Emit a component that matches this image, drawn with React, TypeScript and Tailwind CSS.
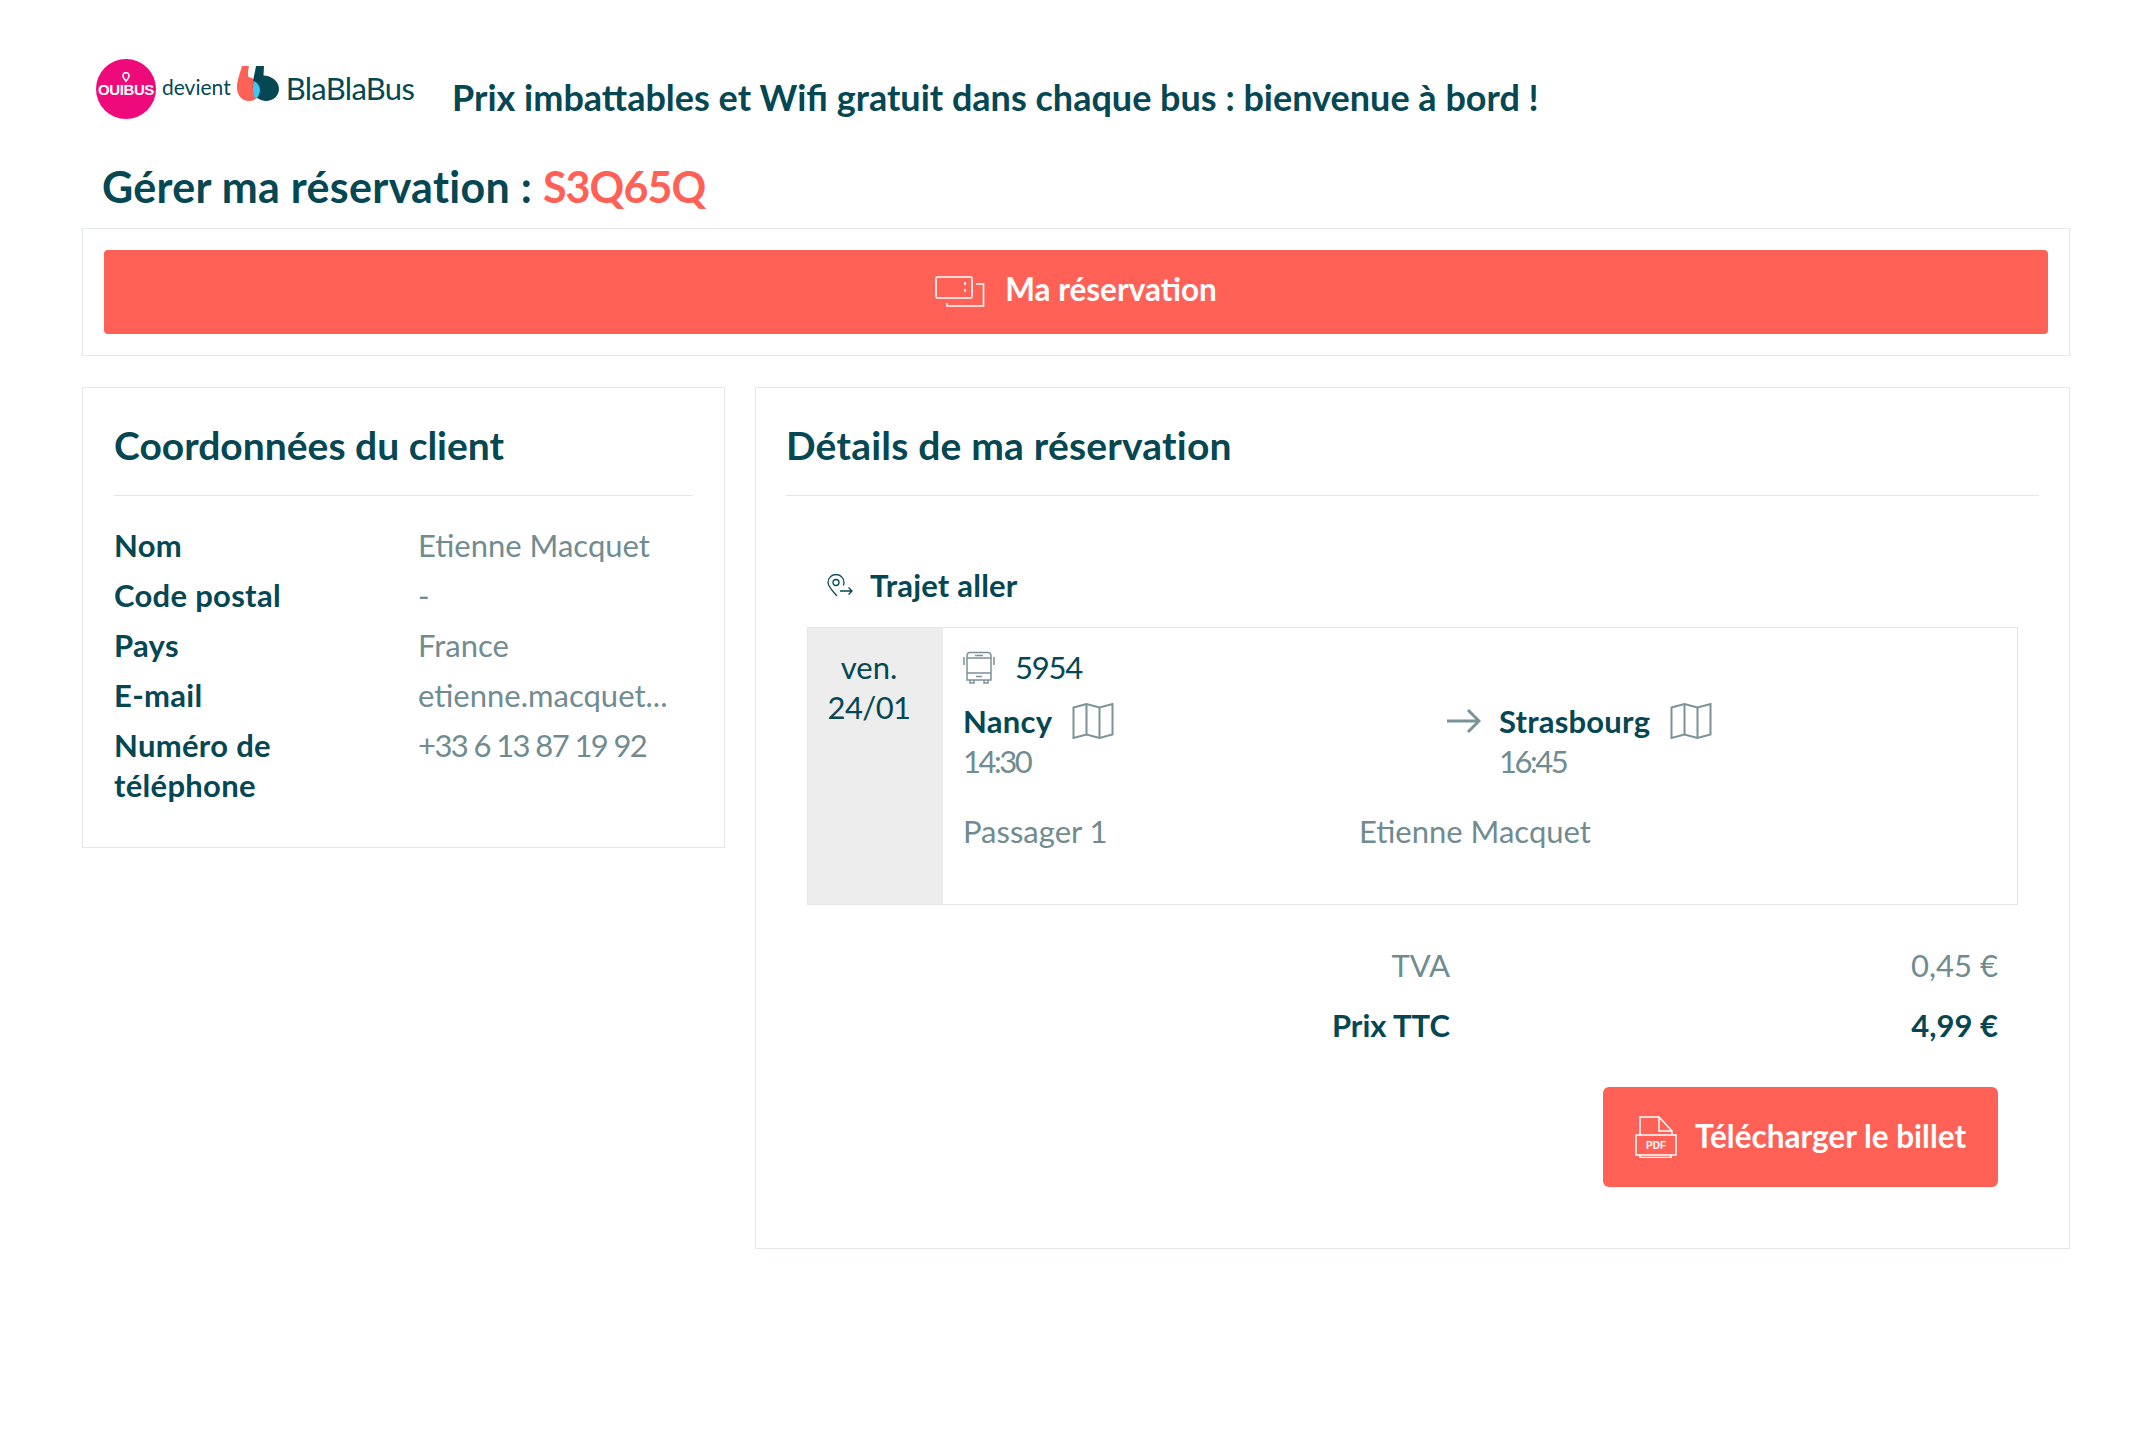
import React from 'react';

const MapIcon = () => (
  <svg width="42" height="38" viewBox="0 0 42 38" fill="none" stroke="#7b9398" strokeWidth="2" className="shrink-0">
    <path d="M1.500 5.500 14.500 2 27.500 5.500 40.500 2V32.500L27.500 36 14.500 32.500 1.500 36Z" />
    <path d="M14.500 2V32.500M27.500 5.500V36" />
  </svg>
);

const Row = ({ label, value, tight }: { label: string; value: string; tight?: boolean }) => (
  <div className="flex items-start leading-[40px] mb-[10px]">
    <div className="w-[304px] shrink-0 pr-6 font-bold text-[#054752] tracking-[0.3px]">{label}</div>
    <div className={tight ? 'text-[#708c91] tracking-[-1.6px]' : 'text-[#708c91]'}>{value}</div>
  </div>
);

export default function App() {
  return (
    <div className="min-h-[1446px] bg-white pl-[82px] pr-[72px] text-[31px] text-[#054752] [font-family:Lato,'Open_Sans',sans-serif]">
      <div className="flex items-start pt-[59px] h-[144px]">
        <div className="flex items-start w-[370px] shrink-0 pl-[14px]">
          <div className="relative w-[60px] h-[60px] rounded-full bg-[#ee0a7b] flex items-center justify-center shrink-0">
            <svg width="8" height="10" viewBox="0 0 10 13" className="absolute top-[13px] left-[26px]" fill="none" stroke="#fff" strokeWidth="2">
              <path d="M5 12C2 8.500 1 6.800 1 5a4 4 0 0 1 8 0c0 1.800-1 3.500-4 7Z" />
            </svg>
            <span className="mt-[2px] text-[15px] font-bold text-white [font-family:'Liberation_Sans',sans-serif] tracking-[-0.4px]">OUIBUS</span>
          </div>
          <span className="ml-[6px] mt-[14px] text-[21px] leading-[28px]">devient</span>
          <svg width="44" height="36" viewBox="0 0 44 36" className="ml-[6px] mt-[7px] shrink-0">
            <path d="M5 0H12C11 4 10.500 8 11.500 11C16 12 23 16 23 24C23 31 18 35 12 35C5 35 0 29 0 22C0 14 3 7 5 0Z" fill="#ff6156" />
            <path d="M19 0H27L26.500 9.500C34 9.500 42 15 42 23C42 30 36 35 29 35C22 35 17 30 16 24C15 15 18 7 19 0Z" fill="#054752" />
            <path d="M16.500 15C20 16 23 20 23 24C23 28 21 31 19 33C17 31 16 27 16 24C16 21 16 18 16.500 15Z" fill="#3dc8f0" />
          </svg>
          <span className="ml-[5px] mt-[11px] text-[31px] leading-[36px] tracking-[-0.7px]">BlaBlaBus</span>
        </div>
        <h1 className="mt-[17px] text-[36px] leading-[42px] font-bold">Prix imbattables et Wifi gratuit dans chaque bus : bienvenue à bord !</h1>
      </div>

      <h2 className="pl-[20px] h-[84px] pt-[18px] text-[43px] leading-[50px] font-bold tracking-[0.3px]">
        Gérer ma réservation : <span className="text-[#ff6156] tracking-[-0.9px]">S3Q65Q</span>
      </h2>

      <div className="border border-[#e4e7e8] p-[21px]">
        <div className="h-[84px] rounded-[4px] bg-[#ff6156] flex items-center justify-center gap-[20px] text-white">
          <svg width="50" height="32" viewBox="0 0 50 32" fill="none" stroke="#fff" strokeWidth="1.6">
            <rect x="1" y="1" width="36" height="21" rx="1.500" />
            <path d="M30 6v3M30 13v3M41 8h7.500v22H12v-3" />
          </svg>
          <span className="mb-[4px] text-[31.500px] font-bold">Ma réservation</span>
        </div>
      </div>

      <div className="flex items-start gap-[30px] mt-[31px]">
        <section className="w-[643px] shrink-0 h-[461px] border border-[#e4e7e8] px-[31px]">
          <h3 className="h-[108px] pt-[34px] text-[39px] leading-[46px] font-bold border-b border-[#e4e7e8]">Coordonnées du client</h3>
          <div className="pt-[29px]">
            <Row label="Nom" value="Etienne Macquet" />
            <Row label="Code postal" value="-" />
            <Row label="Pays" value="France" />
            <Row label="E-mail" value="etienne.macquet..." />
            <Row label="Numéro de téléphone" value="+33 6 13 87 19 92" tight />
          </div>
        </section>

        <section className="flex-1 h-[862px] border border-[#e4e7e8] px-[30px]">
          <h3 className="h-[108px] pt-[34px] text-[39px] leading-[46px] font-bold tracking-[0.2px] border-b border-[#e4e7e8]">Détails de ma réservation</h3>

          <div className="px-[21px]">
            <div className="flex items-center h-[131px] pt-[48px] pl-[20px] gap-[17px]">
              <svg width="26" height="24" viewBox="0 0 26 24" fill="none" stroke="#054752" strokeWidth="1.3">
                <path d="M10 22C4 15.500 1 12 1 8.500a8 8 0 0 1 16 0c0 1-.2 2-.7 3" />
                <circle cx="9" cy="8.500" r="3" />
                <path d="M13 17h12M21.500 13.500 25 17l-3.500 3.500" />
              </svg>
              <span className="font-bold tracking-[0.2px]">Trajet aller</span>
            </div>

            <div className="flex h-[278px] border border-[#e4e7e8]">
              <div className="w-[135px] shrink-0 bg-[#ededed] pt-[19px] pr-[13px] text-center leading-[40px]">ven.<br /><span className="tracking-[-0.6px]">24/01</span></div>
              <div className="flex-1 pl-[20px]">
                <div className="flex items-center gap-[20px] h-[40px] mt-[19px]">
                  <svg width="32" height="33" viewBox="0 0 32 33" fill="none" stroke="#7b9398" strokeWidth="1.5">
                    <path d="M1 14V6M31 14V6" />
                    <path d="M4 29V5c0-2 1-3.500 3-3.500h18c2 0 3 1.500 3 3.500v24Z" />
                    <path d="M4 22h24M4 7h24M12 4.500h8M13 25.500h6M7 29v3h4v-3M21 29v3h4v-3" />
                  </svg>
                  <span className="tracking-[-1.2px]">5954</span>
                </div>
                <div className="flex mt-[14px]">
                  <div className="w-[484px] shrink-0">
                    <div className="flex items-center gap-[19px] h-[40px]">
                      <span className="font-bold tracking-[0.3px]">Nancy</span>
                      <MapIcon />
                    </div>
                    <div className="text-[#708c91] leading-[40px] tracking-[-2.500px]">14:30</div>
                  </div>
                  <div className="w-[52px] shrink-0 h-[40px] flex items-center">
                    <svg width="34" height="26" viewBox="0 0 34 26" fill="none" stroke="#7b9398" strokeWidth="3">
                      <path d="M0 13h32M21 2l11 11-11 11" />
                    </svg>
                  </div>
                  <div>
                    <div className="flex items-center gap-[20px] h-[40px]">
                      <span className="font-bold tracking-[0.2px]">Strasbourg</span>
                      <MapIcon />
                    </div>
                    <div className="text-[#708c91] leading-[40px] tracking-[-2.500px]">16:45</div>
                  </div>
                </div>
                <div className="flex mt-[30px] text-[#708c91] leading-[40px]">
                  <div className="w-[396px] shrink-0">Passager 1</div>
                  <div>Etienne Macquet</div>
                </div>
              </div>
            </div>

            <div className="mt-[40px] pr-[20px]">
              <div className="flex leading-[40px] text-[#708c91]">
                <div className="w-[643px] text-right">TVA</div>
                <div className="flex-1 text-right">0,45 €</div>
              </div>
              <div className="flex leading-[40px] mt-[20px] font-bold">
                <div className="w-[643px] text-right">Prix TTC</div>
                <div className="flex-1 text-right">4,99 €</div>
              </div>
              <div className="flex justify-end mt-[42px]">
                <div className="w-[395px] h-[100px] rounded-[6px] bg-[#ff6156] flex items-center justify-center gap-[18px] text-white">
                  <svg width="42" height="42" viewBox="0 0 42 42" fill="none" stroke="#fff" strokeWidth="1.500">
                    <path d="M5 19V1h19l13 14v4M24 1v14h13" />
                    <path d="M1 19h40v20H1ZM5 39v2.500h31V39" />
                    <text x="21" y="33" fill="#fff" stroke="none" textAnchor="middle" fontSize="10" fontWeight="700" fontFamily="Liberation Sans">PDF</text>
                  </svg>
                  <span className="font-bold text-[31.500px]">Télécharger le billet</span>
                </div>
              </div>
            </div>
          </div>
        </section>
      </div>
    </div>
  );
}
